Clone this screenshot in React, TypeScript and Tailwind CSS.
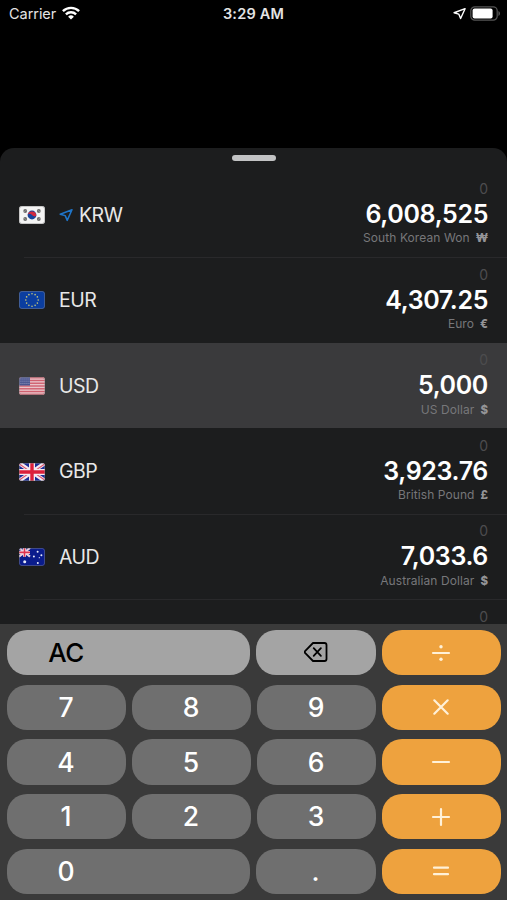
import type { ReactNode } from 'react';

interface Currency {
  code: string;
  name: string;
  symbol: string;
  value: string;
  flag: ReactNode;
  isLocal?: boolean;
  isActive?: boolean;
}

function KoreaFlag() {
  return (
    <>
      <rect width="26" height="18" fill="#f4f4f4" />
      <circle cx="13" cy="9" r="4.4" fill="#17449c" />
      <path d="M8.7 8.6a4.4 4.4 0 0 1 8.6 1.2c-1.4 1-2.900.7-4.300-.8-1.300-1.400-2.900-1.800-4.300-.4Z" fill="#d3293f" />
      <g fill="#6a6a6a">
        <circle cx="6.2" cy="5" r="1.9" />
        <circle cx="19.8" cy="5" r="1.9" />
        <circle cx="6.2" cy="13" r="1.9" />
        <circle cx="19.8" cy="13" r="1.9" />
      </g>
      <path d="M5 5.900l2.300-1.800M18.700 4.100L21 5.900M5 12.100l2.300 1.800M18.700 13.900l2.300-1.800" stroke="#b5b5b5" strokeWidth="0.5" />
    </>
  );
}

function EuFlag() {
  const stars = Array.from({ length: 12 }, (_, i) => (i * Math.PI) / 6);
  return (
    <>
      <rect width="26" height="18" fill="#0b3ea0" />
      {stars.map((a) => (
        <circle key={a} cx={13 + 6.2 * Math.sin(a)} cy={9 - 6.2 * Math.cos(a)} r="0.8" fill="#c9c878" />
      ))}
    </>
  );
}

function UsFlag() {
  return (
    <>
      <rect width="26" height="18" fill="#e9c3c9" />
      {[0, 1, 2, 3, 4, 5, 6].map((i) => (
        <rect key={i} y={i * 2.77} width="26" height="1.4" fill="#d0606f" />
      ))}
      <rect width="11" height="8.5" fill="#4b5590" />
      <path d="M1.500 2h9M1.500 4.200h9M1.500 6.400h9" stroke="#a9adcb" strokeWidth="0.9" strokeDasharray="0.9 1.1" />
    </>
  );
}

function UkFlag() {
  return (
    <>
      <rect width="26" height="18" fill="#1a2c96" />
      <path d="M0 0l26 18M26 0L0 18" stroke="#f3e9f0" strokeWidth="4" />
      <path d="M0 .8l11 7.600M26 .8l-11 7.600M0 17.200l11-7.600M26 17.200l-11-7.600" stroke="#e0526c" strokeWidth="1.1" />
      <path d="M13 0v18M0 9h26" stroke="#f3e9f0" strokeWidth="6" />
      <path d="M13 0v18M0 9h26" stroke="#dc1f3a" strokeWidth="3.4" />
    </>
  );
}

function AuFlag() {
  return (
    <>
      <rect width="26" height="18" fill="#0a1c8c" />
      <path d="M0 0l11 8.600M11 0L0 8.600" stroke="#e6cfe0" strokeWidth="2.2" />
      <path d="M5.500 0v8.800M0 4.400h11" stroke="#f5e3ea" strokeWidth="3" />
      <path d="M5.500 0v8.800M0 4.400h11" stroke="#dd3350" strokeWidth="1.6" />
      <g fill="#e8ebf8">
        <circle cx="5.7" cy="13.8" r="1.5" />
        <circle cx="18.6" cy="3.8" r="1" />
        <circle cx="14.9" cy="8.6" r="1" />
        <circle cx="22.4" cy="7.2" r="1" />
        <circle cx="18.8" cy="15" r="1" />
        <circle cx="20.3" cy="9.7" r="0.6" />
      </g>
    </>
  );
}

const currencies: Currency[] = [
  { code: 'KRW', name: 'South Korean Won', symbol: '₩', value: '6,008,525', flag: <KoreaFlag />, isLocal: true },
  { code: 'EUR', name: 'Euro', symbol: '€', value: '4,307.25', flag: <EuFlag /> },
  { code: 'USD', name: 'US Dollar', symbol: '$', value: '5,000', flag: <UsFlag />, isActive: true },
  { code: 'GBP', name: 'British Pound', symbol: '£', value: '3,923.76', flag: <UkFlag /> },
  { code: 'AUD', name: 'Australian Dollar', symbol: '$', value: '7,033.6', flag: <AuFlag /> },
];

function LocationArrow({ className }: { className: string }) {
  return (
    <svg viewBox="0 0 14 14" className={className} fill="none" stroke="currentColor" strokeWidth="1.5" strokeLinejoin="round">
      <path d="M13 1.800L1.200 6.200l5 1.400L8.200 12.400Z" />
    </svg>
  );
}

function StatusBar() {
  return (
    <div className="grid h-[28px] shrink-0 grid-cols-3 items-center pr-[6px] pl-[9px] text-[14.5px] leading-none text-[#e4e4e4]">
      <div className="flex items-center gap-[6px]">
        <span className="tracking-[-0.05px]">Carrier</span>
        <svg viewBox="0 0 18 14" className="-mt-[2px] h-[14px] w-[18px]" fill="none" stroke="#fff" strokeWidth="2.4">
          <path d="M.9 5.200C5.400.7 12.600.7 17.100 5.200" />
          <path d="M3.900 8.300c2.900-2.800 7.300-2.800 10.200 0" />
          <path d="M9 13.600L6.100 10.700a4.100 4.100 0 0 1 5.800 0Z" fill="#fff" stroke="none" />
        </svg>
      </div>
      <span className="-ml-[3px] text-center font-semibold tracking-[0.2px] whitespace-nowrap">3:29 AM</span>
      <div className="-mt-[2px] flex items-center justify-end gap-[4px]">
        <LocationArrow className="h-[13px] w-[13px] text-white" />
        <svg viewBox="0 0 31 15" className="h-[15px] w-[31px]">
          <rect x=".8" y=".8" width="26.4" height="13.4" rx="4" fill="none" stroke="#555" strokeWidth="1.2" />
          <rect x="2.6" y="2.6" width="20" height="9.8" rx="2" fill="#fff" />
          <path d="M28.500 5v5c1.800-.8 1.800-4.200 0-5Z" fill="#666" />
        </svg>
      </div>
    </div>
  );
}

function CurrencyRow({ currency }: { currency: Currency }) {
  const { code, name, symbol, value, flag, isLocal, isActive } = currency;

  return (
    <div className={`h-[85.6px] shrink-0 ${isActive ? 'bg-[#3a3a3c]' : ''}`}>
      <div className="flex h-full items-center px-[19px]">
        <svg viewBox="0 0 26 18" className="mt-px h-[18px] w-[26px] shrink-0 rounded-[3px]">
          {flag}
          <rect x=".4" y=".4" width="25.2" height="17.2" rx="2.6" fill="none" stroke="#8a8a8a" strokeOpacity="0.6" strokeWidth="0.8" />
        </svg>
        <div className="mt-[2px] ml-[14px] flex flex-1 items-center text-[19.5px] tracking-[-0.5px] text-[#e8e8e8]">
          {isLocal && <LocationArrow className="mr-[6px] h-[14px] w-[14px] text-[#1f74c8]" />}
          <span>{code}</span>
        </div>
        <div className="flex h-full flex-col items-end pt-[8.6px]">
          <span className="text-[14px] leading-[17px] text-[#4c4c4e]">0</span>
          <span className="mt-[2px] text-[25px] leading-[30px] font-semibold tracking-[-0.35px] text-white">{value}</span>
          <div className="mt-[1.4px] flex gap-[6px] text-[12px] leading-[16px] text-[#77777a]">
            <span className="tracking-[0.08px]">{name}</span>
            <span className="text-[11.5px] font-extrabold text-[#949497]">{symbol}</span>
          </div>
        </div>
      </div>
      {!isActive && code !== 'EUR' && <div className="-mb-px ml-[24px] h-px bg-[#29292b]" />}
    </div>
  );
}

const operators: Record<string, ReactNode> = {
  '÷': (
    <>
      <path d="M2 10h16" />
      <circle cx="10" cy="3.7" r="1.7" fill="currentColor" stroke="none" />
      <circle cx="10" cy="16.3" r="1.7" fill="currentColor" stroke="none" />
    </>
  ),
  '×': <path d="M3.300 3.300l13.400 13.400M16.700 3.300L3.300 16.700" />,
  '−': <path d="M2 10h16" />,
  '+': <path d="M2 10h16M10 2v16" />,
  '=': <path d="M3 6.700h14M3 13.200h14" />,
};

// 'AC' and '0' take two columns, with the label centered over the first one
const keys = ['AC', '⌫', '÷', '7', '8', '9', '×', '4', '5', '6', '−', '1', '2', '3', '+', '0', '.', '='];

function Key({ label }: { label: string }) {
  const base = 'flex items-center rounded-[20px] text-[26.5px] leading-none font-medium';

  if (operators[label]) {
    return (
      <button aria-label={label} className={`${base} justify-center bg-[#eea23e] pr-px text-[#fff1d8]`}>
        <svg viewBox="0 0 20 20" className="h-[20px] w-[20px]" fill="none" stroke="currentColor" strokeWidth="2.2" strokeLinecap="round">
          {operators[label]}
        </svg>
      </button>
    );
  }
  if (label === '⌫') {
    return (
      <button aria-label="Delete" className={`${base} -ml-px justify-center bg-[#a4a4a4] text-black`}>
        <svg viewBox="0 0 24 20" className="-mt-px h-[20px] w-[24px]" fill="none" stroke="currentColor" strokeWidth="1.8" strokeLinecap="round" strokeLinejoin="round">
          <path d="M9 1h11.500a2 2 0 0 1 2 2v14a2 2 0 0 1-2 2H9L1.300 11.200a1.700 1.700 0 0 1 0-2.400Z" />
          <path d="M9.700 6.200l7.200 7.600M16.900 6.200l-7.200 7.600" />
        </svg>
      </button>
    );
  }
  if (label === 'AC') {
    return (
      <button className={`${base} col-span-2 mr-px bg-[#a4a4a4] text-black`}>
        <span className="mt-px w-[118px] text-center text-[26px] tracking-[-0.5px]">{label}</span>
      </button>
    );
  }
  if (label === '0') {
    return (
      <button className={`${base} col-span-2 mr-px bg-[#6f6f6f] text-white`}>
        <span className="w-[118px] text-center">{label}</span>
      </button>
    );
  }
  return (
    <button className={`${base} justify-center bg-[#6f6f6f] pr-px text-white ${label === '.' ? '-ml-px' : ''}`}>
      {label}
    </button>
  );
}

export default function App() {
  return (
    <div className="flex h-[900px] w-[507px] flex-col overflow-hidden bg-black font-[Inter,sans-serif]">
      <StatusBar />
      <div className="mt-[120px] flex h-[476px] shrink-0 flex-col overflow-hidden rounded-t-[14px] bg-[#1c1d1e]">
        <div className="flex h-[23.5px] shrink-0 justify-center pt-[7px]">
          <div className="h-[6px] w-[44px] rounded-full bg-[#c2c3c4]" />
        </div>
        {currencies.map((currency) => (
          <CurrencyRow key={currency.code} currency={currency} />
        ))}
        <div className="shrink-0 pt-[8.6px] pr-[19px] text-right text-[14px] leading-[17px] text-[#4c4c4e]">0</div>
      </div>
      <div className="grid flex-1 grid-cols-4 grid-rows-5 gap-x-[6px] gap-y-[9.4px] bg-[#3a3a3a] pt-[6px] pr-[6px] pb-[6px] pl-[7px]">
        {keys.map((label) => (
          <Key key={label} label={label} />
        ))}
      </div>
    </div>
  );
}
